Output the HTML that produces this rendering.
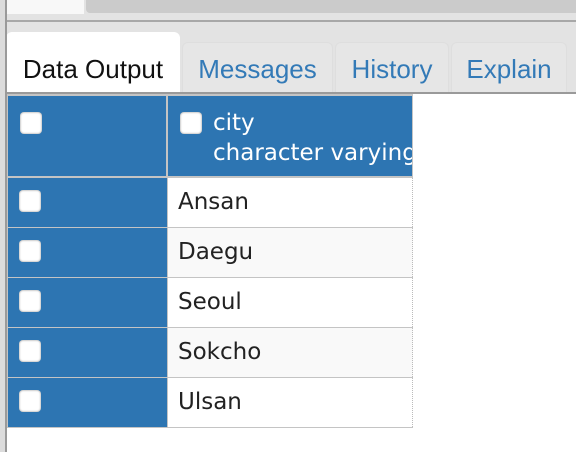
<!DOCTYPE html>
<html><head><style>
*{margin:0;padding:0;box-sizing:border-box}
body{width:576px;height:452px;overflow:hidden;background:#fff;position:relative;font-family:"Liberation Sans",Helvetica,sans-serif}
.abs{position:absolute}
.tab{position:absolute;top:42px;height:50px;background:#e6e6e6;border-radius:6px 6px 0 0;color:#337ab7;font-size:26px;text-align:center;line-height:52px;border:1px solid #dedede;border-bottom:none;white-space:nowrap}
.cb{position:absolute;width:22px;height:22px;background:#fff;border-radius:4px;box-shadow:0 0 2px #888 inset}
.row{position:absolute;left:8px;width:405px;height:49px}
.row .l{position:absolute;left:0;top:0;width:159px;height:49px;background:#2d75b2}
.row .r{position:absolute;left:160px;top:0;width:245px;height:49px;border-right:1px dotted #bbb;font-family:"DejaVu Sans",Verdana,sans-serif;font-size:23px;color:#222;padding-left:10px;line-height:49px}
</style></head><body>
<div class="abs" style="left:0;top:0;width:576px;height:92px;background:#e3e3e3"></div>
<div class="abs" style="left:6px;top:0;width:78px;height:14px;background:#f8f8f8"></div>
<div class="abs" style="left:86px;top:0;width:490px;height:13px;background:#cbcbcb;border-radius:0 0 0 4px"></div>
<div class="abs" style="left:6px;top:20px;width:570px;height:2px;background:#a8a8a8"></div>
<div class="abs" style="left:6px;top:32px;width:174px;height:61px;background:#fff;border-radius:6px 6px 0 0;font-size:26px;color:#111;text-align:center;line-height:74px;white-space:nowrap">Data Output</div>
<div class="tab" style="left:182px;width:151px">Messages</div>
<div class="tab" style="left:335px;width:114px">History</div>
<div class="tab" style="left:451px;width:116px">Explain</div>
<div class="abs" style="left:6px;top:92px;width:570px;height:2px;background:#9a9a9a"></div>
<div class="abs" style="left:0;top:0;width:6px;height:452px;background:#dcdcdc"></div>
<div class="abs" style="left:5px;top:0;width:2px;height:452px;background:#9a9a9a"></div>
<div class="abs" style="left:7px;top:94px;width:406px;height:334px;background:#c4c4c4"></div>
<div class="abs" style="left:8px;top:96px;width:158px;height:80px;background:#2d75b2"></div>
<div class="abs" style="left:168px;top:96px;width:244px;height:80px;background:#2d75b2;overflow:hidden;white-space:nowrap;color:#fff;font-family:'DejaVu Sans',Verdana,sans-serif;font-size:23px;line-height:30px;padding:12px 0 0 45px">city<br>character varying</div>
<div class="cb" style="left:20px;top:112px"></div>
<div class="cb" style="left:180px;top:112px"></div>
<div class="row" style="top:178px"><div class="l"></div><div class="r" style="background:#fff">Ansan</div><div class="cb" style="left:11px;top:12px"></div></div>
<div class="row" style="top:228px"><div class="l"></div><div class="r" style="background:#f9f9f9">Daegu</div><div class="cb" style="left:11px;top:12px"></div></div>
<div class="row" style="top:278px"><div class="l"></div><div class="r" style="background:#fff">Seoul</div><div class="cb" style="left:11px;top:12px"></div></div>
<div class="row" style="top:328px"><div class="l"></div><div class="r" style="background:#f9f9f9">Sokcho</div><div class="cb" style="left:11px;top:12px"></div></div>
<div class="row" style="top:378px"><div class="l"></div><div class="r" style="background:#fff">Ulsan</div><div class="cb" style="left:11px;top:12px"></div></div>
</body></html>
